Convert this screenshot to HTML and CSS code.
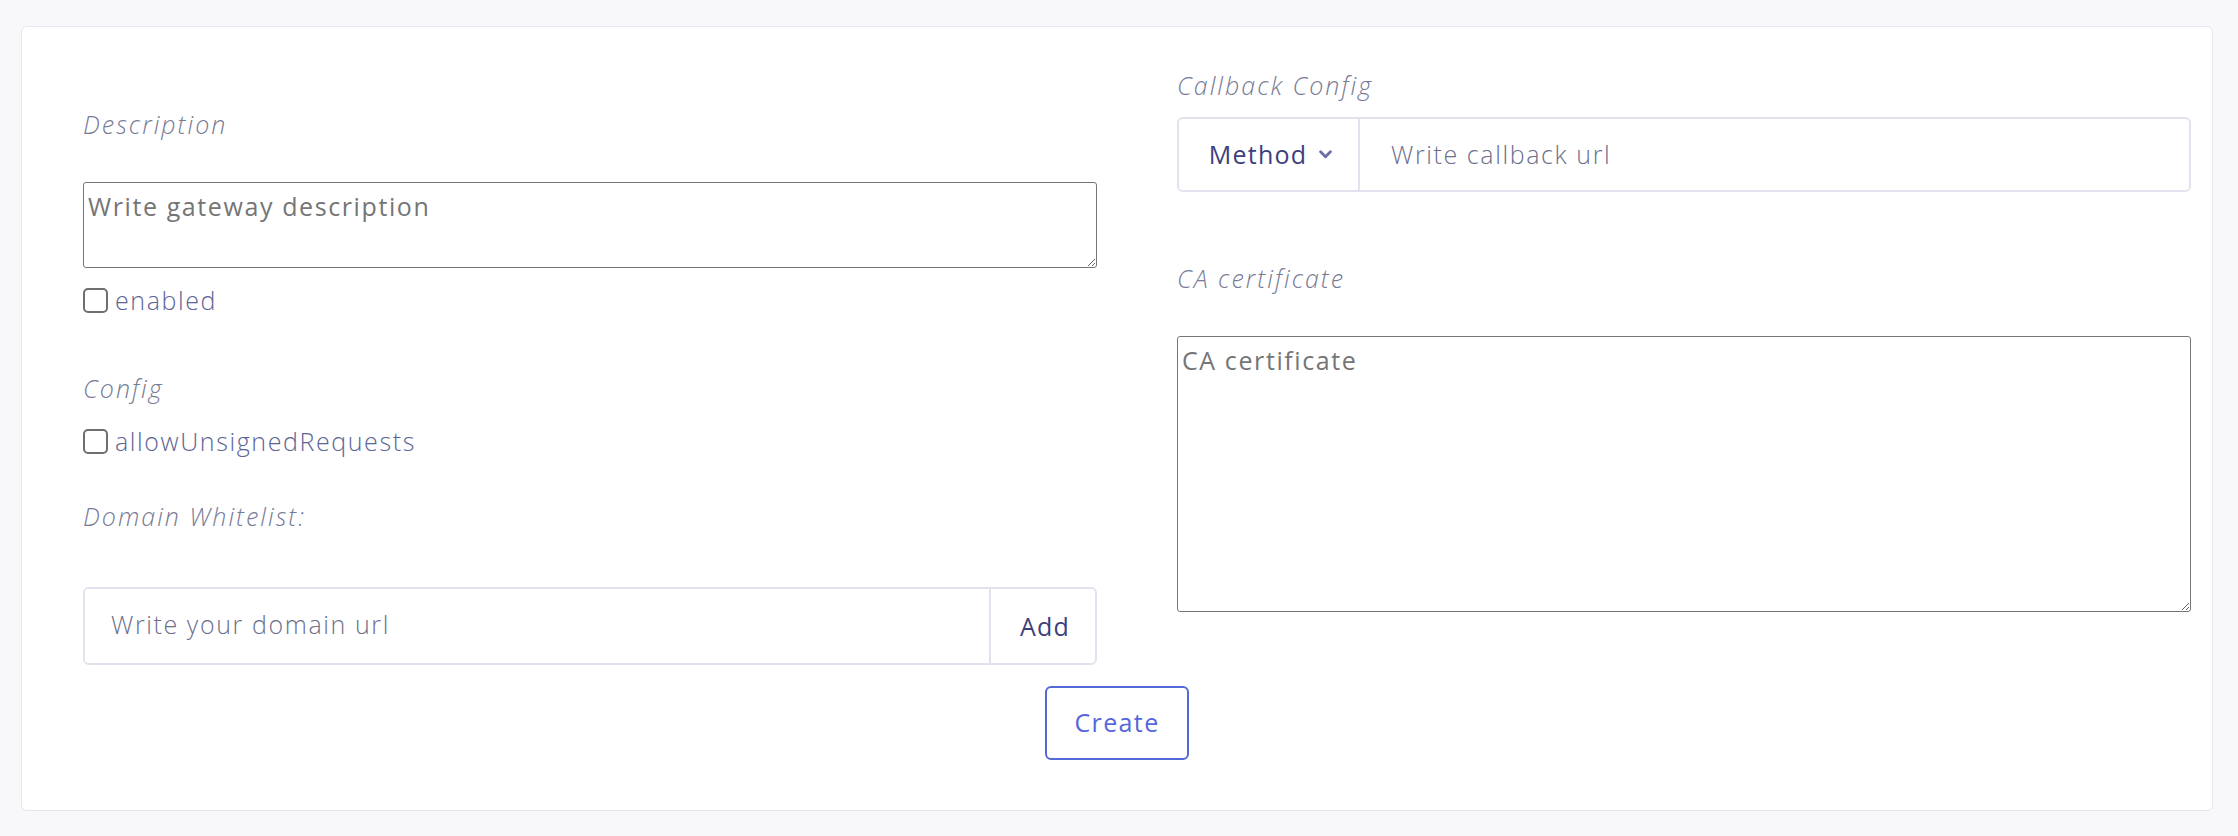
FILE: index.html
```html
<!DOCTYPE html>
<html lang="en">
<head>
<meta charset="utf-8">
<title>Gateway</title>
<link rel="stylesheet" href="styles.css">
</head>
<body>
<div class="page">
  <form class="card">
    <div class="cols">
      <div class="col col-left">
        <label class="label label-desc">Description</label>
        <textarea class="area area-desc" placeholder="Write gateway description"></textarea>
        <label class="check check-enabled"><input type="checkbox"><span>enabled</span></label>
        <div class="label label-config">Config</div>
        <label class="check check-allow"><input type="checkbox"><span>allowUnsignedRequests</span></label>
        <div class="label label-domain">Domain Whitelist:</div>
        <div class="group group-domain">
          <input class="group-input input-domain" type="text" placeholder="Write your domain url">
          <button type="button" class="group-btn btn-add">Add</button>
        </div>
      </div>
      <div class="col col-right">
        <div class="label label-callback">Callback Config</div>
        <div class="group group-callback">
          <button type="button" class="group-btn btn-method">Method
            <svg class="chev" viewBox="0 0 12 8" width="13" height="9"><path d="M1.5 1.5 L6 6 L10.5 1.5" fill="none" stroke="currentColor" stroke-width="2.6" stroke-linecap="round" stroke-linejoin="round"/></svg>
          </button>
          <input class="group-input input-callback" type="text" placeholder="Write callback url">
        </div>
        <div class="label label-ca">CA certificate</div>
        <textarea class="area area-ca" placeholder="CA certificate"></textarea>
      </div>
    </div>
    <div class="actions">
      <button type="button" class="btn-create">Create</button>
    </div>
  </form>
</div>
</body>
</html>
```

FILE: styles.css
```css
* { box-sizing: border-box; }
html, body { margin: 0; padding: 0; }
body {
  background: #f8f8fa;
  font-family: "Open Sans", "Liberation Sans", sans-serif;
  font-size: 25px;
  letter-spacing: 1.6px;
  color: #3c4080;
}
.page {
  padding: 26px 25px 25px 21px;
}
.card {
  background: #ffffff;
  border: 1px solid #e6e7ee;
  border-radius: 6px;
  height: 785px;
  padding: 0 21px 0 61px;
}
.cols {
  display: grid;
  grid-template-columns: 1014px 1014px;
  column-gap: 80px;
  align-items: start;
}
.col { display: flex; flex-direction: column; }
.col-left { padding-top: 79px; }
.col-right { padding-top: 40px; }

.label {
  font-style: italic;
  font-weight: 300;
  letter-spacing: 2px;
  color: #787b96;
  line-height: 36px;
  height: 36px;
}
.area {
  display: block;
  width: 100%;
  border: 1px solid #767676;
  border-radius: 3px;
  font-family: inherit;
  font-size: 25px;
  letter-spacing: 1.6px;
  line-height: 34px;
  padding: 6px 4px 2px;
  color: #333;
  resize: vertical;
  margin-top: 40px;
}
.area::placeholder { color: #757575; }
.area-desc { height: 86px; }
.area-ca { height: 276px; }

.check {
  display: flex;
  align-items: center;
  height: 36px;
  color: #5c6496;
  font-weight: 300;
}
.check input {
  appearance: none;
  -webkit-appearance: none;
  width: 25px;
  height: 25px;
  margin: 0 7px 0 0;
  border: 2px solid #6f6f6f;
  border-radius: 5px;
  background: #fff;
}
.check-enabled { margin-top: 14px; }
.label-config { margin-top: 52px; }
.check-allow { margin-top: 17px; }
.label-domain { margin-top: 39px; }

.group {
  display: flex;
  width: 100%;
  border: 2px solid #e2e2ef;
  border-radius: 6px;
  overflow: hidden;
}
.group-domain { height: 78px; margin-top: 53px; }
.group-callback { height: 75px; margin-top: 14px; }
.label-ca { margin-top: 68px; }

.group-input {
  flex: 1;
  min-width: 0;
  border: 0;
  outline: none;
  font-family: inherit;
  font-size: 25px;
  letter-spacing: 1.6px;
  color: #333;
  background: #fff;
}
.group-input::placeholder { color: #6c6f8c; font-weight: 300; }
.input-domain { padding: 0 0 4px 26px; }
.input-callback { padding: 0 0 2px 31px; }

.group-btn {
  border: 0;
  background: #fff;
  font-family: inherit;
  font-size: 25px;
  letter-spacing: 1.2px;
  color: #3c3f7c;
  display: flex;
  align-items: center;
  justify-content: center;
}
.btn-add {
  width: 106px;
  border-left: 2px solid #e2e2ef;
  padding: 0 0 0 4px;
}
.btn-method {
  width: 181px;
  border-right: 2px solid #e2e2ef;
  padding: 0 0 2px 4px;
  gap: 12px;
}
.chev { color: #6b6fa3; margin-top: 2px; }

.actions {
  display: flex;
  justify-content: center;
  margin: 21px -21px 0 -61px;
}
.btn-create {
  width: 144px;
  height: 74px;
  border: 2px solid #5468d6;
  border-radius: 6px;
  background: #fff;
  color: #5566dd;
  font-family: inherit;
  font-size: 25px;
  letter-spacing: 1.4px;
  padding: 0 0 2px;
}
```
